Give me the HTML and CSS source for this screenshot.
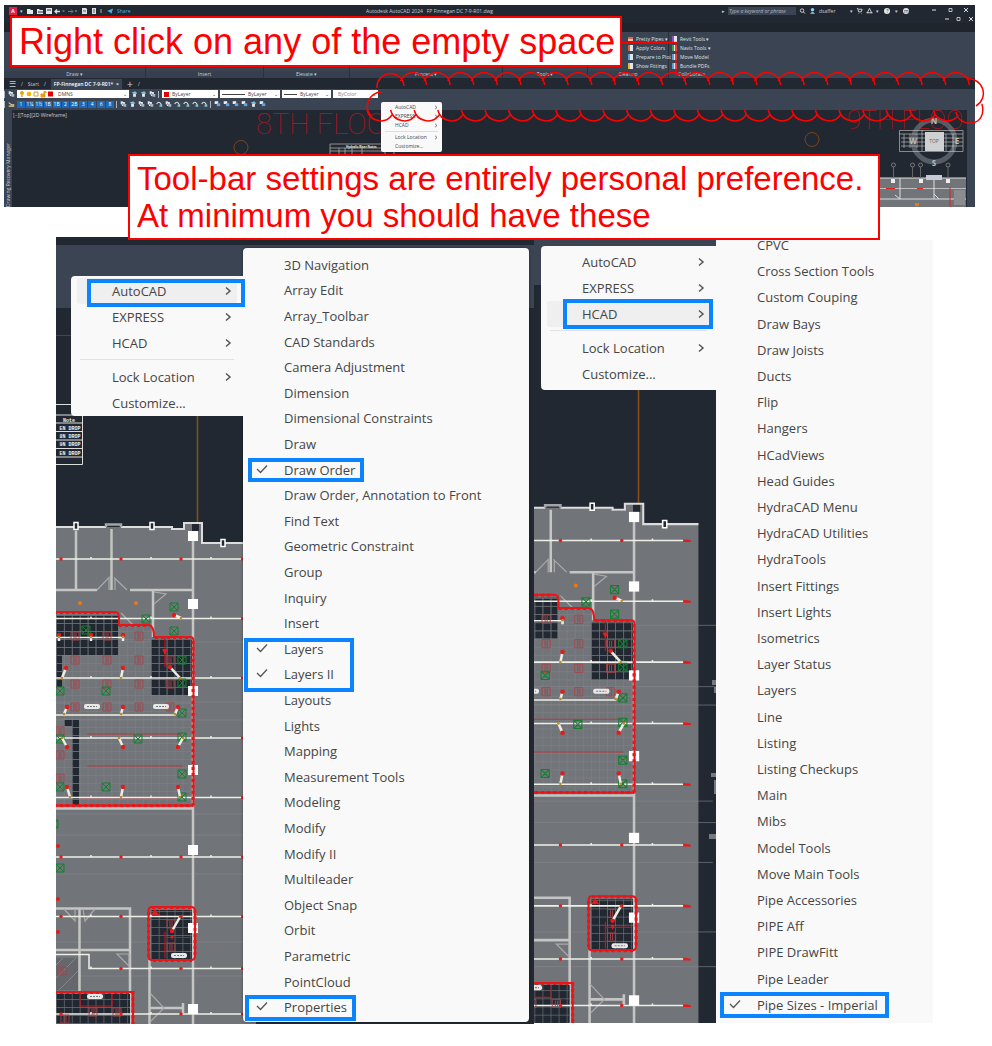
FILE: index.html
```html
<!DOCTYPE html>
<html lang="en">
<head>
<meta charset="utf-8">
<title>Tool-bar settings</title>
<link rel="stylesheet" href="styles.css">
</head>
<body>
<svg class="defs" aria-hidden="true">
  <defs>
    <symbol id="chev" viewBox="0 0 8 10"><path d="M2 1.500l4 3.500-4 3.500" fill="none" stroke="#555" stroke-width="1.500"/></symbol>
    <symbol id="check" viewBox="0 0 12 10"><path d="M1 5l3.500 3.500L11 1.500" fill="none" stroke="#555" stroke-width="1.300"/></symbol>
    <symbol id="layer" viewBox="0 0 10 10"><path d="M1 5V1h3v1h3v3H5v3H3z" fill="#dfe5ea"/><path d="M5 5h4v4H5z" fill="#9fb3c3"/><path d="M1 8l3-4" stroke="#333" stroke-width="1"/></symbol>
    <symbol id="layer2" viewBox="0 0 10 10"><path d="M1 3l5-2 3 3-4 2z" fill="#7fc0da"/><path d="M3 5h4v4H3z" fill="#e5e8ec"/></symbol>
    <symbol id="arc" viewBox="0 0 10 10"><path d="M1 5q3-5 6 0l1 3" fill="none" stroke="#e2e6ea" stroke-width="1.600"/><path d="M5 6h4v3H5z" fill="#74c4c0"/></symbol>
    <symbol id="order" viewBox="0 0 10 10"><path d="M1 1h5v4H1z" fill="#e8edf2"/><path d="M4 4h5v4H4z" fill="#5aa6e0"/></symbol>
    <pattern id="tiles" x="56" y="615" width="7.900" height="8" patternUnits="userSpaceOnUse"><path d="M0 0H7.900M0 0V8" stroke="#6d7176" stroke-width="1.300" fill="none"/></pattern>
    <pattern id="grid" x="56" y="615" width="7.900" height="8" patternUnits="userSpaceOnUse"><path d="M0 0H7.900M0 0V8" stroke="#83868a" stroke-width=".8" fill="none"/></pattern>
    <g id="plan">
      <path d="M0 527H172V530H184V523H202V542H256V1040H0z" fill="#717479"/>
      <path d="M56 642H280M56 702H280M56 720H280M56 814H270M56 835H280M56 874H270M56 942H280M56 976H280" stroke="#85878a" stroke-width=".6"/>
      <path d="M192 523h7v8h-7z" fill="#222831"/>
      <path d="M0 527H106M121 527H172V529H184V523H202V543H256" fill="none" stroke="#ddd" stroke-width="2"/>
      <path d="M106 527V524.500H121V527" fill="none" stroke="#a4a5a6" stroke-width="2.500"/>
      <g fill="none" stroke="#c4c5c4" stroke-width="2.500"><path d="M76 531V590M111.500 529V590M0 590H97M130 590H193M193 535V1040M153 590V637M0 808.500H193M0 908.500H130V1040M79.500 908V1040M0 950H130M149.500 960V1040M150 1008H183M183 1003V1013"/></g>
      <g fill="none" stroke="#aaa" stroke-width="1.200"><path d="M97 590L109 577.500V590M114 577.500L127 590M115 578V590M154 592L166 594L154 604M121 613L134 626M64 615L74 620L64 626M117 954H129V966zM64 909L75 921V909M83 909L85 921L95 909M64 990L75 979V990M150 993L164 1008L150 1022"/></g>
      <path d="M56 958H78V990H56z" fill="#64676c"/><path d="M56 965l7-7M56 978l20-20M59 990l19-19" stroke="#85878a" stroke-width="1"/>
      <path d="M56 615H118V655H62V687H56zM151 639H192V695H151zM64 720H79V806H72V726H64z" fill="#222831"/>
      <path d="M56 615H119V626H152V639H192V804H56z" fill="url(#grid)"/>
      <path d="M56 615H118V655H62V687H56zM151 639H192V695H151zM64 720H79V806H72V726H64z" fill="url(#tiles)"/>
      <path d="M151 910H192V959H151zM0 994H130V1040H0z" fill="#222831"/>
      <path d="M151 910H192V959H151zM0 994H130V1040H0z" fill="url(#tiles)"/>
      <path d="M87 734H182M87 766H183M80 798H178" stroke="#b53b3f" stroke-width="1"/>
      <path d="M0 559H244M0 618.500H244M0 678H244M0 738H244M0 797.500H244M0 857H244M0 916.500H244M0 954.500H89V968.500H244M0 1014H244M0 637.500H124M0 715H175L178 708" fill="none" stroke="#eeefe6" stroke-width="1.500"/>
      <g id="plan-marks"></g>
      <path d="M165 638V667M165 932V958M165 937.500H190M80 1006H112V994M80 994V1006" fill="none" stroke="#c81018" stroke-width="1.200"/>
      <path d="M162 649h6l-3 6zM151 915l4-6 4 6zM170 935h4l-2 5z" fill="#e31b1b"/>
      <path d="M0 612H115Q119 612 119 618V625H149Q154 626 154 637H190Q193.500 637 193.500 641V805.500H0M152 907H191Q195 907 195 911V956Q195 960 191 960H152Q148.500 960 148.500 956V911Q148.500 907 152 907M0 992H133V1040" fill="none" stroke="#e91519" stroke-width="2"/>
      <path d="M0 612.500H115M119 625.500H150M155 637.500H190M193 641V805M0 805.500H193M152 907.500H192M195 910V958M192 960.500H152M148.500 957V910M0 992.500H133V1040" fill="none" stroke="#e91519" stroke-width="3" stroke-dasharray="3 3"/>
    </g>
  </defs>
</svg>

<main class="page">
  <section class="app" aria-label="AutoCAD window">
    <header class="titlebar">
      <div class="quick">
        <button class="logo">A</button><span>▾</span>
        <svg viewBox="0 0 78 8" class="quick-icons"><path d="M1 2h3l1 1h2v4H1zM11 2h2l1 1h3v4h-6zM20 1h6v6h-6z" fill="#e6e6e6"/><path d="M21 3h4M12 5h6" stroke="#222831"/><path d="M34 4.500h-5M31 2.500l-2 2 2 2" stroke="#ddd" fill="none" stroke-width="1.300"/><path d="M42 4.500h5M45 2.500l2 2-2 2" stroke="#777" fill="none"/><path d="M36.500 4h2M49 4h2M74 3h2M74 5h2" stroke="#aaa"/><path d="M56 1h4l1 1v5h-5zM66 1h4v6h-4z" fill="#ddd"/><path d="M57 4h3M67 3h2M67 5h2" stroke="#466"/></svg>
        <svg viewBox="0 0 8 8" class="ico"><path d="M0 4l7-3-2 6-2-2z" fill="#4bb2e8"/></svg><a class="share" href="#">Share</a>
      </div>
      <div class="doc-title">Autodesk AutoCAD 2024 &nbsp; FP Finnegan DC 7-9-R01.dwg</div>
      <div class="account">
        <span>▸</span><input class="search" aria-label="Search" placeholder="Type a keyword or phrase">
        <svg viewBox="0 0 8 8" class="ico"><circle cx="3.500" cy="3.500" r="2" fill="none" stroke="#ddd"/><path d="M5 5l2 2" stroke="#ddd"/></svg>
        <svg viewBox="0 0 8 8" class="ico"><circle cx="4" cy="2.500" r="2" fill="#8ed0f2"/><path d="M1 7q3-4 6 0z" fill="#8ed0f2"/></svg>
        <span class="user">dsaffer</span><span>▾</span>
        <svg viewBox="0 0 8 8" class="ico"><path d="M1 1h1l1 4h3l1-3H2.500M3 7h.5M6 7h.5" fill="none" stroke="#ddd"/></svg>
        <svg viewBox="0 0 8 8" class="ico"><path d="M4 1L1.500 6h5zM.5 6h2M5.500 6h2" fill="none" stroke="#ddd"/></svg><span>▾</span>
        <button class="round">?</button><span>▾</span><button class="round">m</button>
        <svg viewBox="0 0 46 18" class="winctl"><path d="M3 5h4M35 3l4 4M39 3l-4 4M16 14h4M40 12l4 4M44 12l-4 4" stroke="#ddd" fill="none"/><path d="M20 3.500h3v3h-3zM28 12.500h3v3h-3z" stroke="#ddd" fill="none" stroke-width=".8"/></svg>
      </div>
    </header>
    <div class="tabstrip"></div>
    <div class="ribbon">
      <section class="panel"><div></div><h2>Draw ▾</h2></section>
      <section class="panel"><div></div><h2>Insert</h2></section>
      <section class="panel"><div></div><h2>Elevate ▾</h2></section>
      <section class="panel"><div></div><h2>Process ▾</h2></section>
      <section class="panel"><div></div><h2>Tools ▾</h2></section>
      <section class="panel cleanup"><div class="tools"><button><i class="t1"></i>Pretty Pipes ▾</button><button><i class="t2"></i>Apply Colors</button><button><i class="t3"></i>Prepare to Plot</button><button><i class="t4"></i>Show Fittings</button></div><h2>Cleanup</h2></section>
      <section class="panel collab"><div class="tools"><button><i class="t5"></i>Revit Tools ▾</button><button><i class="t6"></i>Navis Tools ▾</button><button><i class="t7"></i>Move Model</button><button><i class="t8"></i>Bundle PDFs</button></div><h2>Collaborate</h2></section>
    </div>
    <nav class="docs"><button class="menu-btn">☰</button><span>/</span><button>Start</button><span>/</span><button class="doc-on">FP-Finnegan DC 7-9-R01* &nbsp;×</button><button class="plus">+</button><span>/</span></nav>
    <div class="toolbars">
      <div class="bar">
        <b class="grip"></b><svg class="ico"><use href="#layer"/></svg>
        <label class="combo layer-combo"><svg viewBox="0 0 36 8" class="layer-icons"><circle cx="3" cy="3" r="2" fill="#e6a800"/><path d="M2.500 5h1v2h-1z" fill="#777"/><circle cx="10" cy="4" r="2.300" fill="#f4b300"/><path d="M15 2h4v4h-4z" fill="none" stroke="#caa13e"/><path d="M22 4h4v3h-4zM25 4V1.500h2V3" fill="#e89a16" stroke="#e89a16"/><path d="M29 1.500h5v5h-5z" fill="#e60000"/></svg><select aria-label="Layer"><option>DMNS</option></select></label>
        <svg class="ico"><use href="#layer2"/></svg><svg class="ico"><use href="#layer2"/></svg><svg class="ico"><use href="#layer"/></svg><b class="grip"></b>
        <label class="combo w56"><i class="swatch"></i><select aria-label="Color"><option>ByLayer</option></select></label>
        <label class="combo w60"><i class="rule"></i><select aria-label="Linetype"><option>ByLayer</option></select></label>
        <label class="combo w49"><i class="rule short"></i><select aria-label="Lineweight"><option>ByLayer</option></select></label>
        <label class="combo w45"><select aria-label="Plot style" disabled><option>ByColor</option></select></label>
      </div>
      <div class="bar">
        <b class="grip"></b><svg class="ico" viewBox="0 0 10 10"><path d="M1 3l4 3h4M1 8h8" stroke="#e6cf8a" fill="none" stroke-width="1.500"/></svg>
        <div class="sizes"><button>1</button><button>1¼</button><button>1½</button><button>1B</button><button>1B</button><button>2</button><button>2B</button><button>3</button><button>4</button><button>6</button><button>8</button></div>
        <b class="grip"></b>
        <svg class="ico"><use href="#layer"/></svg><svg class="ico"><use href="#layer2"/></svg><svg class="ico"><use href="#layer"/></svg><svg class="ico"><use href="#layer"/></svg><svg class="ico"><use href="#arc"/></svg><svg class="ico"><use href="#layer"/></svg><svg class="ico"><use href="#arc"/></svg><svg class="ico"><use href="#arc"/></svg><svg class="ico"><use href="#arc"/></svg><svg class="ico"><use href="#arc"/></svg>
        <b class="grip"></b>
        <svg class="ico"><use href="#order"/></svg><svg class="ico"><use href="#order"/></svg><svg class="ico"><use href="#order"/></svg><svg class="ico"><use href="#order"/></svg><svg class="ico"><use href="#layer2"/></svg><svg class="ico"><use href="#order"/></svg>
      </div>
    </div>
    <div class="work">
      <div class="palette">Drawing Recovery Manager</div>
      <svg class="canvas" viewBox="12 110 955 97" preserveAspectRatio="xMaxYMin slice">
        <text x="13" y="117" class="vp">[−][Top][2D Wireframe]</text>
        <text x="256" y="134" class="floor">8TH FLOO</text>
        <text x="847" y="129" class="floor floor-sm">9TH FLOO</text>
        <circle cx="241" cy="147.500" r="7" fill="none" stroke="#8b4c16" stroke-width=".8"/>
        <circle cx="812" cy="139.500" r="7" fill="none" stroke="#8b4c16" stroke-width=".8"/>
        <path d="M330 144H394M330 148H394M330 151H382M330 144V154M339 148V154M345 148V154M352 148V154M362 148V154M385 148V154M394 144V154" stroke="#bbb" stroke-width=".7"/>
        <text x="346" y="147.500" class="mini">Hydralic Riser Notes</text>
        <path d="M880 178H966V207H880z" fill="#717479"/>
        <path d="M880 178H966M880 199H966M900 178V199M934 178V199M900 199l-5-4M939 199l-5-5" stroke="#ddd" stroke-width="1" fill="none"/>
        <path d="M880 188.500H966" stroke="#ddd" stroke-width=".7"/><path d="M886 188.500H895M917 188.500H923M950 187V207" stroke="#d22" stroke-width="1"/>
        <path d="M891 179h4v4h-4zM919 179h4v4h-4zM946 179h4v4h-4z" fill="#eee"/><path d="M926 175h16v5h-16z" fill="#c6cad4"/><path d="M954 190h11v15h-11z" fill="#8b8d91"/><path d="M915 203h4v3h-4z" fill="#e87910"/>
        <path d="M893.500 167V178M912.500 167V178M920.500 167V178M948 167V178" stroke="#666"/><g fill="none" stroke="#777"><circle cx="893.500" cy="165" r="2"/><circle cx="912.500" cy="165" r="2"/><circle cx="920.500" cy="165" r="2"/><circle cx="948" cy="165" r="2"/></g>
        <circle cx="934" cy="141" r="21" fill="none" stroke="#646a72" stroke-width="5" opacity=".8"/>
        <path d="M899.500 130.500H963V151.500H899.500zM899 134H963M901 138H963M901 142H963M901 146H963M904 134V148M910 134V148M917 134V148M922 130V151M946 134V151M953 134V151" fill="none" stroke="#ccc" stroke-width=".6"/>
        <path d="M925 132h19v19h-19z" fill="#cfd0d2"/>
        <g class="cube"><text x="934" y="124">N</text><text x="934" y="166">S</text><text x="913" y="144">W</text><text x="957" y="144">E</text></g><text x="934" y="143" class="top">TOP</text>
      </svg>
      <div class="edge"></div>
    </div>

    <ul class="mini-menu">
      <li><button>AutoCAD<svg><use href="#chev"/></svg></button></li><li><button>EXPRESS<svg><use href="#chev"/></svg></button></li><li><button>HCAD<svg><use href="#chev"/></svg></button></li>
      <li class="sep"></li><li><button>Lock Location<svg><use href="#chev"/></svg></button></li><li><button>Customize...</button></li>
    </ul>
    <svg class="markup" viewBox="0 0 992 207" preserveAspectRatio="none" aria-hidden="true">
      <g fill="none" stroke="#f00" stroke-width="1.500"><path d="M620 42.500H676V76"/><path id="cloud"/></g>
    </svg>
    <p class="note note-one">Right click on any of the empty space</p>
    <p class="note note-two">Tool-bar settings are entirely personal preference.<br>At minimum you should have these</p>
  </section>

  <section class="shots">
    <div class="shot shot-left">
      <svg class="plan" viewBox="56 237 478 787" preserveAspectRatio="xMinYMin slice" aria-hidden="true">
        <path d="M56 237H534V1024H56z" fill="#222831"/><path d="M56 245H534V308H56z" fill="#3b4453"/>
        <path d="M56 335.500H72" stroke="#a51d25"/><path d="M197.500 400V530" stroke="#8a5018" stroke-width="1.500"/>
        <path d="M56 404.500H82.500V464.500H56M56 415H82M56 423H82M56 431.500H82M56 440H82M56 448.500H82M56 457H82" fill="none" stroke="#ddd"/>
        <g class="drops"><text x="69" y="421.500">Note</text><text x="70" y="429.500">EN DROP</text><text x="70" y="438">8N DROP</text><text x="70" y="446">9N DROP</text><text x="70" y="454.500">EN DROP</text></g>
        <use href="#plan"/>
      </svg>
      <ul class="menu">
        <li class="hot mark-autocad"><button>AutoCAD<svg><use href="#chev"/></svg></button></li><li><button>EXPRESS<svg><use href="#chev"/></svg></button></li><li><button>HCAD<svg><use href="#chev"/></svg></button></li>
        <li class="sep"></li><li><button>Lock Location<svg><use href="#chev"/></svg></button></li><li><button>Customize...</button></li>
      </ul>
      <ul class="submenu">
        <li><button>3D Navigation</button></li><li><button>Array Edit</button></li><li><button>Array_Toolbar</button></li><li><button>CAD Standards</button></li><li><button>Camera Adjustment</button></li><li><button>Dimension</button></li><li><button>Dimensional Constraints</button></li><li><button>Draw</button></li>
        <li class="mark mark-order"><button><svg><use href="#check"/></svg>Draw Order</button></li>
        <li><button>Draw Order, Annotation to Front</button></li><li><button>Find Text</button></li><li><button>Geometric Constraint</button></li><li><button>Group</button></li><li><button>Inquiry</button></li><li><button>Insert</button></li>
        <li class="mark mark-layers"><button><svg><use href="#check"/></svg>Layers</button></li><li><button><svg><use href="#check"/></svg>Layers II</button></li>
        <li><button>Layouts</button></li><li><button>Lights</button></li><li><button>Mapping</button></li><li><button>Measurement Tools</button></li><li><button>Modeling</button></li><li><button>Modify</button></li><li><button>Modify II</button></li><li><button>Multileader</button></li><li><button>Object Snap</button></li><li><button>Orbit</button></li><li><button>Parametric</button></li><li><button>PointCloud</button></li>
        <li class="mark mark-props"><button><svg><use href="#check"/></svg>Properties</button></li>
      </ul>
    </div>
    <div class="shot shot-right">
      <svg class="plan" viewBox="534 240 399 783" preserveAspectRatio="xMinYMin slice" aria-hidden="true">
        <path d="M534 240H933V1023H534z" fill="#222831"/><path d="M534 240H716V285H534z" fill="#3b4453"/>
        <path d="M638.500 380V512" stroke="#8a5018" stroke-width="1.500"/>
        <use href="#plan" transform="translate(436.800 -30.800) scale(1.022)"/>
        <path d="M712 680h4v5h-4zM714 687h2v6h-2zM711 773h5v4h-5zM714 780h2v14h-2zM709 834h7v5h-7z" fill="#77797c"/>
      </svg>
      <ul class="menu">
        <li><button>AutoCAD<svg><use href="#chev"/></svg></button></li><li><button>EXPRESS<svg><use href="#chev"/></svg></button></li><li class="hot mark-hcad"><button>HCAD<svg><use href="#chev"/></svg></button></li>
        <li class="sep"></li><li><button>Lock Location<svg><use href="#chev"/></svg></button></li><li><button>Customize...</button></li>
      </ul>
      <ul class="submenu">
        <li><button>CPVC</button></li><li><button>Cross Section Tools</button></li><li><button>Custom Couping</button></li><li><button>Draw Bays</button></li><li><button>Draw Joists</button></li><li><button>Ducts</button></li><li><button>Flip</button></li><li><button>Hangers</button></li><li><button>HCadViews</button></li><li><button>Head Guides</button></li><li><button>HydraCAD Menu</button></li><li><button>HydraCAD Utilities</button></li><li><button>HydraTools</button></li><li><button>Insert Fittings</button></li><li><button>Insert Lights</button></li><li><button>Isometrics</button></li><li><button>Layer Status</button></li><li><button>Layers</button></li><li><button>Line</button></li><li><button>Listing</button></li><li><button>Listing Checkups</button></li><li><button>Main</button></li><li><button>Mibs</button></li><li><button>Model Tools</button></li><li><button>Move Main Tools</button></li><li><button>Pipe Accessories</button></li><li><button>PIPE Aff</button></li><li><button>PIPE DrawFitt</button></li><li><button>Pipe Leader</button></li>
        <li class="mark mark-pipe"><button><svg><use href="#check"/></svg>Pipe Sizes - Imperial</button></li>
      </ul>
    </div>
  </section>
</main>
<script src="script.js"></script>
</body>
</html>
```
FILE: styles.css
```css
*, *::after { box-sizing: border-box; }
body { margin: 0; background: #fff; font-family: "Open Sans", "Noto Sans", sans-serif; }
ul { list-style: none; margin: 0; padding: 0; }
button { font: inherit; color: inherit; background: none; border: 0; padding: 0; margin: 0; white-space: nowrap; }
.defs { position: absolute; width: 0; height: 0; }
.page { padding: 5px 0 22px; }

.app { position: relative; padding: 0 17px 0 4px; color: #c9ced6; font-size: 5px; line-height: 8px; }
.titlebar { display: grid; grid-template-columns: minmax(0, 362fr) minmax(0, 356fr) minmax(0, 253fr); height: 11px; background: #222831; align-items: center; }
.quick, .account { display: flex; align-items: center; gap: 3px; }
.quick { padding-left: 5px; }
.logo { width: 8px; height: 8px; background: #e01e50; color: #fff; font-weight: 700; line-height: 8px; }
.quick-icons { width: 78px; height: 8px; }
.ico { width: 7px; height: 8px; flex: none; }
.share { color: #4bb2e8; text-decoration: none; }
.doc-title { white-space: nowrap; }
.search { width: 68px; height: 8px; border: 0; padding: 0 1px; background: #3b4453; font: inherit; font-style: italic; color: #c9ced6; }
.search::placeholder { color: #b4bac4; }
.titlebar .account { gap: 3px; height: 11px; }
.user { margin-right: 12px; }
.round { width: 6px; height: 6px; line-height: 6px; border-radius: 50%; background: #e6e6e6; color: #222831; margin: 0 2px; text-align: center; }
.winctl { width: 46px; height: 18px; margin-left: auto; flex: none; align-self: flex-start; }
.tabstrip { height: 16px; background: #222831; border-bottom: 9px solid #20252d; }
.ribbon { display: grid; grid-template-columns: minmax(0, 142fr) minmax(0, 118fr) minmax(0, 86fr) minmax(0, 153fr) minmax(0, 85fr) minmax(0, 81fr) minmax(0, 306fr); height: 46px; background: #3b4453; }
.panel { display: flex; flex-direction: column; justify-content: space-between; border-right: 1px solid #2b323d; }
.panel:last-child { border: 0; }
.panel h2 { margin: 0; font-size: 5px; line-height: 7px; font-weight: 400; text-align: center; background: #363f4d; }
.collab h2 { text-align: left; padding-left: 9px; background: none; }
.tools { display: flex; flex-direction: column; gap: 1px; padding-top: 3px; align-items: flex-start; }
.cleanup .tools { padding-left: 40px; }
.collab .tools { padding-left: 3px; }
.tools button { display: flex; align-items: center; gap: 3px; line-height: 8px; color: #dfe3e8; }
.tools i { flex: none; width: 5px; height: 6px; background: #e3e6ea; border-left: 2px solid #56a0d8; }
.tools .t1 { height: 4px; background: #e9c6a8; border: 0; border-top: 2px solid #d76a50; }
.tools .t2 { border-color: #c96a3a; }
.tools .t4 { border-color: #e6b62c; }
.tools .t5 { border-color: #8a50c0; }
.tools .t6 { border-color: #3f9e4e; }
.docs { display: flex; align-items: center; gap: 5px; height: 11px; background: #222831; padding-left: 5px; }
.docs .menu-btn { font-size: 8px; }
.docs button { line-height: 10px; }
.docs .doc-on { background: #3b4453; color: #fff; font-weight: 600; padding: 0 3px; }
.docs .plus { font-size: 11px; }
.toolbars { height: 21px; background: #3b4453; }
.bar { display: flex; align-items: center; gap: 2px; height: 10px; }
.grip { width: 1px; height: 7px; background: #aeb5bf; margin-right: 1px; }
.combo { display: flex; align-items: center; height: 8px; background: #fff; color: #333; padding: 0 2px; }
.combo select { flex: 1; min-width: 0; appearance: none; border: 0; padding: 0 0 0 3px; background: none; font: 5px/8px "Open Sans", sans-serif; color: #444; opacity: 1; }
.combo::after { content: "⌄"; font-size: 5px; }
.layer-combo { width: 112px; }
.layer-icons { width: 36px; height: 8px; flex: none; }
.w56 { width: 56px; } .w60 { width: 60px; } .w49 { width: 49px; } .w45 { width: 45px; }
.w45 select { color: #888; }
.swatch { width: 5px; height: 5px; background: #e60000; }
.rule { width: 23px; height: 1px; background: #444; flex: none; }
.rule.short { width: 13px; }
.sizes { display: flex; gap: 1px; width: 97px; }
.sizes button { flex: 1; height: 7px; background: #1e68b8; color: #fff; line-height: 7px; overflow: hidden; }
.work { display: flex; height: 97px; background: #222831; }
.palette { width: 8px; background: #3b4453; line-height: 8px; writing-mode: vertical-rl; transform: rotate(180deg); white-space: nowrap; overflow: hidden; }
.canvas { flex: 1; min-width: 0; height: 97px; }
.edge { width: 8px; background: #3b4453; }
.vp { font-size: 5px; fill: #c9ced6; }
.floor { font-family: Roboto, sans-serif; font-weight: 100; font-size: 29px; fill: #a81820; }
.floor-sm { font-size: 26px; }
.mini { font-size: 3px; fill: #eee; font-weight: 700; }
.cube { font-size: 8px; font-weight: 700; fill: #bbb; text-anchor: middle; }
.top { font-size: 5px; fill: #666; text-anchor: middle; }
.mini-menu { position: absolute; left: 381px; top: 97px; width: 61px; padding: 1px 4px; background: #f9f9f9; color: #444; border-radius: 2px; line-height: 9px; }
.mini-menu button { display: flex; width: 100%; padding-left: 10px; justify-content: space-between; align-items: center; }
.mini-menu svg { width: 4px; height: 5px; }
.mini-menu .sep { height: 1px; margin: 1px 0; background: #ddd; }
.markup { position: absolute; left: 0; top: -5px; width: 100%; height: 207px; }
.note { position: absolute; margin: 0; background: #fff; border: 2px solid #f00; color: #f00; font-family: "Liberation Sans", Arial, sans-serif; white-space: nowrap; z-index: 3; }
.note-one { left: 10px; top: 11px; width: 612px; padding: 0 7px; font-size: 36px; line-height: 47px; }
.note-two { left: 128px; top: 149px; width: 752px; padding: 4px 7px; font-size: 33px; line-height: 37px; }

.shots { display: grid; grid-template-columns: 478fr 399fr; min-height: 787px; margin: 30px 59px 0 56px; }
.shot { position: relative; display: grid; align-items: start; color: #454545; font-size: 13px; line-height: 20px; overflow: hidden; }
.plan { position: absolute; inset: 0; width: 100%; height: 100%; }
.shot-left { grid-template-columns: 172fr 286fr; padding: 11px 5px 2px 15px; }
.shot-right { grid-template-columns: 175fr 217fr; padding: 0 0 0 7px; margin: 3px 0 1px; }
.menu { position: relative; background: #f9f9f9; border-radius: 4px 0 0 4px; padding: 3px 6px; z-index: 2; }
.shot-left .menu { margin-top: 28px; padding: 2px 6px 0; }
.shot-right .menu { margin-top: 6px; }
.menu li { position: relative; height: 26px; }
.menu button { display: flex; align-items: center; justify-content: space-between; width: 100%; height: 100%; padding: 0 5px 0 35px; }
.menu svg { width: 8px; height: 10px; }
.menu li.sep { height: 1px; margin: 3px 3px 4px; background: #e2e2e2; }
.menu .hot { background: #efefef; border-radius: 3px; }
.submenu { position: relative; display: grid; grid-auto-rows: 1fr; align-self: stretch; background: #f9f9f9; z-index: 1; }
.shot-left .submenu { padding: 4px 0 2px; border-radius: 4px; box-shadow: 0 0 3px #0006; }
.shot-right .submenu { margin-top: -8px; padding-bottom: 5px; }
.submenu li { position: relative; min-height: 0; display: flex; align-items: center; }
.submenu button { display: flex; align-items: center; padding-left: 41px; position: relative; }
.submenu svg { position: absolute; left: 13px; top: 4px; width: 12px; height: 10px; }
.mark::after, .mark-autocad::after, .mark-hcad::after { content: ""; position: absolute; border: 4px solid #0a84ff; pointer-events: none; }
.mark-autocad::after { left: 10px; right: -8px; top: 1px; bottom: -3px; }
.mark-hcad::after { left: 16px; right: -3px; top: -2px; bottom: -2px; }
.mark-order::after { left: 5px; width: 116px; top: 1px; bottom: 0; }
.mark-layers::after { left: 1px; width: 110px; top: 2px; height: 54px; }
.mark-props::after { left: 2px; width: 111px; top: 1px; bottom: -1px; }
.mark-pipe::after { left: 4px; width: 169px; top: 0; bottom: 0; }
.drops { font: 700 5px "Liberation Mono", monospace; fill: #eee; text-anchor: middle; }
```
FILE: script.js
```js
// Revision cloud around the empty toolbar area
let cloud = "M381 92A14.500 14.500 0 0 0 371 116";
for (let i = 0; i < 25; i++) cloud += `M${377 + i * 23.6} ${i ? 81 : 88}a13.500 13.500 0 0 1 ${i ? 26 : 27} ${i ? 4 : -2}`;
for (let i = 0; i < 25; i++) cloud += `M${367 + i * 23.6} 110a14 14 0 0 0 25 5`;
cloud += "M967 79A14.500 14.500 0 0 1 976 106M956 112C958 128 988 128 982 104";
document.getElementById("cloud").setAttribute("d", cloud);

// Symbols on the floor plan
const columns = [531, 599, 686, 765, 845, 923, 1004].map(y => `<path d="M188 ${y}h10v10h-10z" fill="#fff"/>`);
const windows = [[76, 526], [152, 526], [223, 543]].map(([x, y]) => `<path d="M${x - 2} ${y - 3.5}h4v7h-4z" fill="#222831" stroke="#fff" stroke-width="1.500"/>`);
const heads = [];
for (const y of [559, 618.5, 678, 738, 797.5, 857, 916.5, 968.5, 1014]) {
  for (const x of [61, 121, 181]) if (!(y > 600 && y < 800) && !(y > 960 && y < 970 && x < 70)) heads.push(`<circle cx="${x}" cy="${y}" r="1.700" fill="#e31b1b"/>`);
  heads.push(`<path d="M241 ${y - 1.5}l7 1 1 2-8 0z" fill="#e31b1b"/>`);
  for (const x of [91, 151, 211]) heads.push(`<path d="M${x} ${y - 2}v2" stroke="#eee" stroke-width="1.500"/>`);
}
const arms = [[62, 678, 66, 668], [121, 678, 123, 668], [180, 678, 170, 667], [64, 714, 67, 707], [121, 714, 123, 707], [175, 714, 178, 707], [62, 738, 67, 747], [119, 738, 123, 747], [183, 738, 178, 747], [70, 797, 67, 787], [121, 797, 123, 787], [180, 797, 178, 787], [181, 618, 174, 615], [180, 917, 172, 931], [59, 637, 59, 641], [91, 637, 91, 641], [123, 637, 123, 641]]
  .map(([a, b, c, d]) => `<path d="M${a} ${b}L${c} ${d}" stroke="#eceee6" stroke-width="2.500"/><circle cx="${c}" cy="${d > 640 && d < 642 ? 635 : d}" r="2.200" fill="#e31b1b"/><circle cx="${a}" cy="${b}" r="1.300" fill="#c58a20"/>`);
const lights = [[75, 636], [107, 636], [139, 636], [75, 660], [107, 660], [139, 660], [170, 660], [75, 684], [107, 684], [139, 684], [170, 684], [75, 707], [107, 707], [139, 707], [170, 707], [60, 731], [60, 755], [60, 778], [171, 924], [171, 947], [62, 971], [93, 1012], [65, 1019], [117, 1012]]
  .map(([x, y]) => `<path d="M${x - 4} ${y - 4}h8v8h-8zM${x - 1} ${y - 3}v6M${x + 1} ${y - 3}v6" fill="none" stroke="#a94148" stroke-width=".9"/>`);
const vents = [[174, 607], [146, 619], [174, 631], [86, 630], [182, 660], [182, 683], [106, 691], [60, 691], [182, 713], [60, 739], [138, 739], [182, 737], [182, 774], [106, 787], [60, 787], [182, 797], [54, 824], [60, 868]]
  .map(([x, y]) => `<path d="M${x - 4} ${y - 4}h8v8h-8zl8 8M${x + 4} ${y - 4}l-8 8" fill="none" stroke="#12802f"/>`);
const tags = [[92, 706], [161, 706], [179, 955], [95, 996]].map(([x, y]) => `<rect x="${x - 8}" y="${y - 2}" width="16" height="5" rx="2" fill="#e8e8e8"/><path d="M${x - 5} ${y + .5}h10" stroke="#777" stroke-dasharray="2 1"/>`);
const lamps = [[80, 603], [136, 603]].map(([x, y]) => `<circle cx="${x}" cy="${y}" r="2" fill="#e87910"/>`);
const valves = [[58, 846], [58, 899], [58, 932]].map(([x, y]) => `<circle cx="${x}" cy="${y}" r="2" fill="#e31b1b"/>`);
document.getElementById("plan-marks").innerHTML = [...columns, ...windows, ...lights, ...vents, ...arms, ...heads, ...tags, ...lamps, ...valves].join("");
```
